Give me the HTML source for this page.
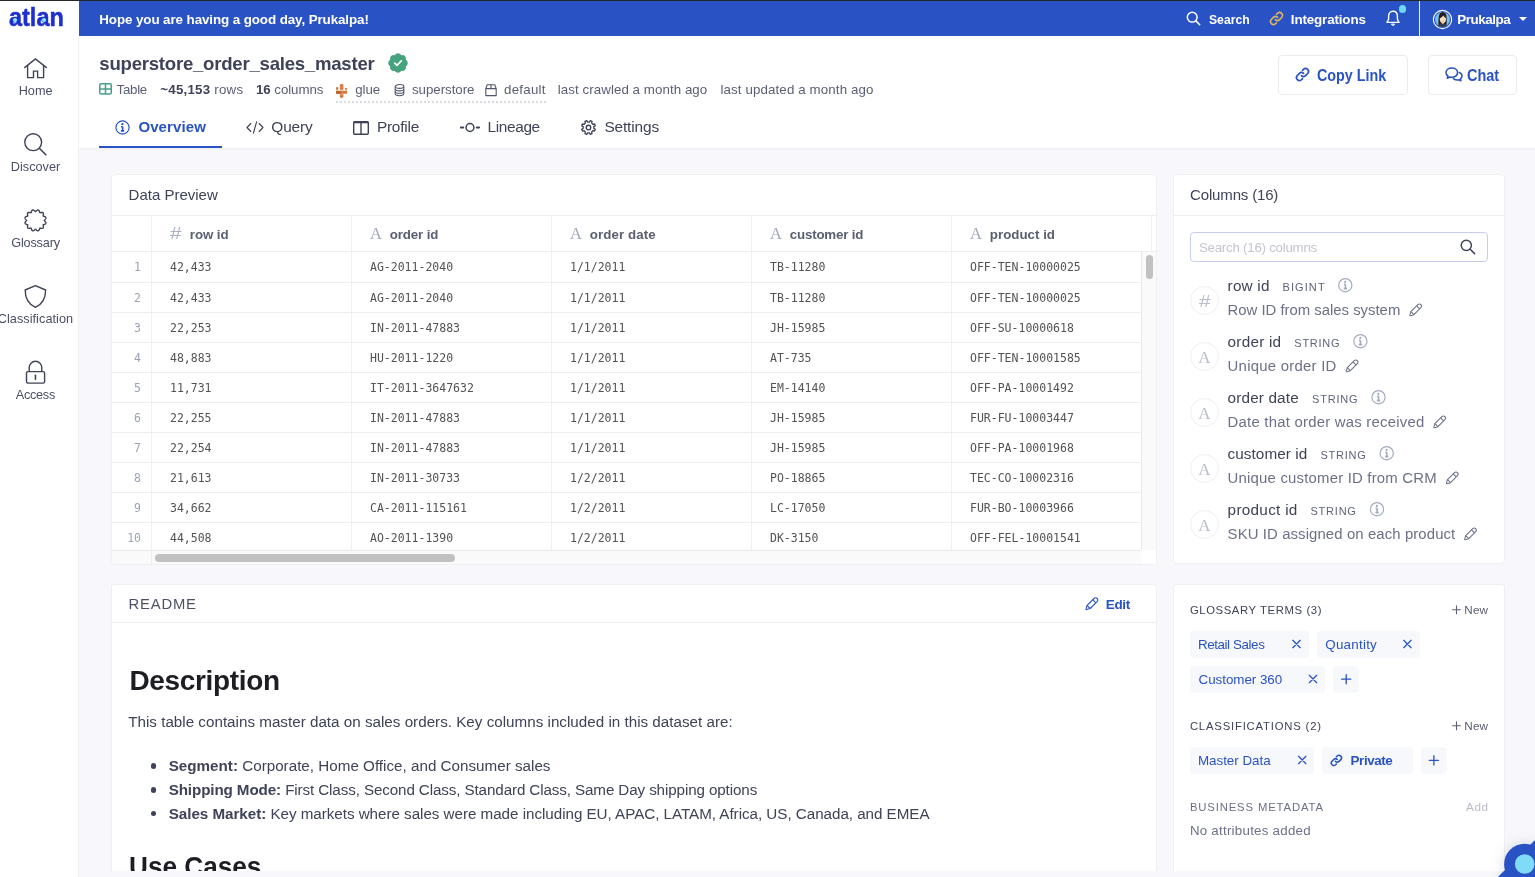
<!DOCTYPE html>
<html lang="en">
<head>
<meta charset="utf-8">
<title>superstore_order_sales_master</title>
<style>
*{box-sizing:border-box;margin:0;padding:0}
html,body{width:1535px;height:877px;overflow:hidden;background:#f8f8fc}
body{font-family:"Liberation Sans",sans-serif;color:#3e4359;position:relative;font-size:14px}
.x{position:absolute;white-space:nowrap}
body>div{will-change:transform}
svg{display:block;overflow:visible}
.card{position:absolute;background:#fff;border:1px solid #f0f0f1;border-radius:4px}
.hl{position:absolute;left:0;height:1px;background:#eeeef2}
.vl{position:absolute;width:1px;background:#f0f0f4}
.chip{position:absolute;border-radius:4px;background:#f7f8fb}
</style>
</head>
<body>
<div class="x" style="left:0px;top:0px;width:1535px;height:1px;background:#25262a"></div>
<!-- SIDEBAR -->
<div class="x" style="left:0;top:1px;width:79px;height:876px;background:#fff;overflow:hidden"><div class="x" style="left:78px;top:35px;width:1px;height:841px;background:#f1f1f1"></div>
<div class="x" id="t1" style="top:1px;font-size:25.5px;line-height:30px;left:8.6px;color:#1d2fd0;font-weight:bold;transform:scaleX(0.9205);transform-origin:0 50%;-webkit-text-stroke:0.500px #1d2fd0;">atlan</div>
<div class="x" style="left:13.3px;top:17px;width:3.6px;height:3.6px;border-radius:50%;background:#8ee3fb;box-shadow:0 0 0 0.600px #1d2fd0"></div>
<div class="x" style="left:42px;top:17px;width:3.6px;height:3.6px;border-radius:50%;background:#8ee3fb;box-shadow:0 0 0 0.600px #1d2fd0"></div>
<svg class="x" style="left:0px;top:-1px" width="79" height="420" viewBox="0 0 79 420" ><g fill="none" stroke="#3e4359" stroke-width="1.400"><path d="M24.300 67.900L35.450 58.900L46.800 67.900"/><path d="M27.600 65.600V77.600H33.500V71.100H37.600V77.600H43.600V65.600"/><circle cx="33.200" cy="142.200" r="8.400"/><path d="M39.300 148.300L46.300 155.300" stroke-width="1.600"/><path d="M44.3 220.4L44.44 220.64L44.65 220.88L44.9 221.14L45.15 221.42L45.38 221.71L45.59 222.01L45.74 222.31L45.84 222.61L45.87 222.9L45.83 223.18L45.73 223.44L45.55 223.68L45.32 223.89L45.03 224.08L44.71 224.23L44.36 224.37L44.01 224.48L43.66 224.58L43.35 224.69L43.11 224.83L43.12 225.1L43.18 225.42L43.26 225.77L43.34 226.13L43.4 226.5L43.43 226.86L43.41 227.2L43.34 227.51L43.22 227.78L43.05 228L42.83 228.17L42.56 228.29L42.25 228.36L41.91 228.38L41.55 228.35L41.18 228.29L40.82 228.21L40.47 228.13L40.15 228.07L39.88 228.06L39.74 228.3L39.63 228.61L39.53 228.96L39.42 229.31L39.28 229.66L39.13 229.98L38.94 230.27L38.73 230.5L38.49 230.68L38.23 230.78L37.95 230.82L37.66 230.79L37.36 230.69L37.06 230.54L36.76 230.33L36.47 230.1L36.19 229.85L35.93 229.6L35.69 229.39L35.45 229.25L35.21 229.39L34.97 229.6L34.71 229.85L34.43 230.1L34.14 230.33L33.84 230.54L33.54 230.69L33.24 230.79L32.95 230.82L32.67 230.78L32.41 230.68L32.17 230.5L31.96 230.27L31.77 229.98L31.62 229.66L31.48 229.31L31.37 228.96L31.27 228.61L31.16 228.3L31.03 228.06L30.75 228.07L30.43 228.13L30.08 228.21L29.72 228.29L29.35 228.35L28.99 228.38L28.65 228.36L28.34 228.29L28.07 228.17L27.85 228L27.68 227.78L27.56 227.51L27.49 227.2L27.47 226.86L27.5 226.5L27.56 226.13L27.64 225.77L27.72 225.42L27.78 225.1L27.79 224.83L27.55 224.69L27.24 224.58L26.89 224.48L26.54 224.37L26.19 224.23L25.87 224.08L25.58 223.89L25.35 223.68L25.17 223.44L25.07 223.18L25.03 222.9L25.06 222.61L25.16 222.31L25.31 222.01L25.52 221.71L25.75 221.42L26 221.14L26.25 220.88L26.46 220.64L26.6 220.4L26.46 220.16L26.25 219.92L26 219.66L25.75 219.38L25.52 219.09L25.31 218.79L25.16 218.49L25.06 218.19L25.03 217.9L25.07 217.62L25.17 217.36L25.35 217.12L25.58 216.91L25.87 216.72L26.19 216.57L26.54 216.43L26.89 216.32L27.24 216.22L27.55 216.11L27.79 215.97L27.78 215.7L27.72 215.38L27.64 215.03L27.56 214.67L27.5 214.3L27.47 213.94L27.49 213.6L27.56 213.29L27.68 213.02L27.85 212.8L28.07 212.63L28.34 212.51L28.65 212.44L28.99 212.42L29.35 212.45L29.72 212.51L30.08 212.59L30.43 212.67L30.75 212.73L31.02 212.74L31.16 212.5L31.27 212.19L31.37 211.84L31.48 211.49L31.62 211.14L31.77 210.82L31.96 210.53L32.17 210.3L32.41 210.12L32.67 210.02L32.95 209.98L33.24 210.01L33.54 210.11L33.84 210.26L34.14 210.47L34.43 210.7L34.71 210.95L34.97 211.2L35.21 211.41L35.45 211.55L35.69 211.41L35.93 211.2L36.19 210.95L36.47 210.7L36.76 210.47L37.06 210.26L37.36 210.11L37.66 210.01L37.95 209.98L38.23 210.02L38.49 210.12L38.73 210.3L38.94 210.53L39.13 210.82L39.28 211.14L39.42 211.49L39.53 211.84L39.63 212.19L39.74 212.5L39.88 212.74L40.15 212.73L40.47 212.67L40.82 212.59L41.18 212.51L41.55 212.45L41.91 212.42L42.25 212.44L42.56 212.51L42.83 212.63L43.05 212.8L43.22 213.02L43.34 213.29L43.41 213.6L43.43 213.94L43.4 214.3L43.34 214.67L43.26 215.03L43.18 215.38L43.12 215.7L43.11 215.97L43.35 216.11L43.66 216.22L44.01 216.32L44.36 216.43L44.71 216.57L45.03 216.72L45.32 216.91L45.55 217.12L45.73 217.36L45.83 217.62L45.87 217.9L45.84 218.19L45.74 218.49L45.59 218.79L45.38 219.09L45.15 219.38L44.9 219.66L44.65 219.92L44.44 220.16Z" stroke-linejoin="round"/><path d="M35.400 285.600L45.600 290C45.700 298.500 42 304.300 35.400 307.400C28.800 304.300 25.100 298.500 25.200 290Z" stroke-linejoin="round"/><path d="M29.200 371.500V367.600A6.300 6.300 0 0 1 41.800 367.600V371.500"/><rect x="26.500" y="371.600" width="18.100" height="11.500" rx="1.500"/><path d="M35.450 375.200V379.300" stroke-linecap="round" stroke-width="1.600"/></g></svg>
<div class="x" id="t2" style="top:82px;font-size:12.7px;line-height:16px;left:18.7px;color:#4a5068;letter-spacing:-0.01px;">Home</div>
<div class="x" id="t3" style="top:158px;font-size:12.7px;line-height:16px;left:10.8px;color:#4a5068;letter-spacing:0.02px;">Discover</div>
<div class="x" id="t4" style="top:234px;font-size:12.7px;line-height:16px;left:11.2px;color:#4a5068;letter-spacing:-0.17px;">Glossary</div>
<div class="x" id="t5" style="top:310px;font-size:12.7px;line-height:16px;left:-2.3px;color:#4a5068;letter-spacing:0.05px;">Classification</div>
<div class="x" id="t6" style="top:386px;font-size:12.7px;line-height:16px;left:15.7px;color:#4a5068;letter-spacing:-0.26px;">Access</div>
</div>
<!-- TOPBAR -->
<div class="x" style="left:79px;top:1px;width:1456px;height:35px;background:#2953c4;color:#fff">
<div class="x" id="t7" style="top:10px;font-size:13.4px;line-height:17px;left:20.3px;color:#fff;font-weight:bold;letter-spacing:-0.1px;">Hope you are having a good day, Prukalpa!</div>
<svg class="x" style="left:1107px;top:10px" width="15" height="15" viewBox="0 0 15 15" ><g fill="none" stroke="#fff" stroke-width="1.500" stroke-linecap="round"><circle cx="6.200" cy="6.200" r="4.900"/><path d="M9.900 9.900L13.700 13.700"/></g></svg>
<div class="x" id="t8" style="top:10px;font-size:13.4px;line-height:17px;left:1129.5px;color:#fff;font-weight:bold;transform:scaleX(0.9088);transform-origin:0 50%;">Search</div>
<svg class="x" style="left:1190px;top:10px" width="15" height="15" viewBox="0 0 15 15" ><g fill="none" stroke="#e2b65a" stroke-width="1.5" stroke-linecap="round"><path d="M6.4 8.6a3 3 0 0 0 4.2 0l2.3-2.300a3 3 0 0 0-4.200-4.200l-1.200 1.200"/><path d="M8.600 6.400a3 3 0 0 0-4.200 0l-2.300 2.300a3 3 0 0 0 4.200 4.200l1.200-1.200"/></g></svg>
<div class="x" id="t9" style="top:10px;font-size:13.4px;line-height:17px;left:1211.8px;color:#fff;font-weight:bold;letter-spacing:-0.14px;">Integrations</div>
<svg class="x" style="left:1305.5px;top:8.7px" width="16" height="17" viewBox="0 0 16 17" ><g fill="none" stroke="#fff" stroke-width="1.400" stroke-linecap="round" stroke-linejoin="round"><path d="M8 1.200C5.200 1.200 3.600 3.400 3.600 6.200V9.200L2 12.400H14L12.400 9.200V6.200C12.400 3.400 10.800 1.200 8 1.200Z"/><path d="M6.400 14.400a1.700 1.500 0 0 0 3.200 0Z" fill="#fff" stroke-width="0.800"/></g></svg>
<div class="x" style="left:1319.7px;top:4.4px;width:7.4px;height:7.4px;border-radius:50%;background:#6fd8f7"></div>
<div class="x" style="left:1340px;top:0px;width:1px;height:35px;background:#f1f3fb"></div>
<svg class="x" style="left:1353px;top:8px" width="21" height="21" viewBox="0 0 21 21" ><defs><clipPath id="avc"><circle cx="10.500" cy="10.500" r="7.400"/></clipPath></defs><circle cx="10.500" cy="10.500" r="9.150" fill="none" stroke="#fff" stroke-width="1.100"/><g clip-path="url(#avc)"><rect x="2" y="2" width="17" height="17" fill="#73c2f4"/><path d="M6.800 18.500C6.300 14 6.300 9.500 7 6.600C7.700 3.800 9.300 3 10.700 3C12.600 3 14 4.200 14.400 6.800C14.800 9.500 14.800 13 14.500 15.500L12 16L8 17Z" fill="#2a1b16"/><path d="M9.700 12.500H11.800V15.200H9.700Z" fill="#f3d3b0"/><ellipse cx="10.900" cy="10.100" rx="3.100" ry="4" fill="#f6dcbc"/><path d="M7.400 9.500C7.600 7 9 5.600 10.800 5.600C12.500 5.600 13.900 6.800 14.200 9.200C13 8.400 11.800 7.500 11.200 6.400C10.300 7.800 8.800 8.900 7.400 9.500Z" fill="#2a1b16"/><path d="M4.800 19C5 16 7.200 14.600 9.700 14.400C10.400 15 11.200 15 11.900 14.400C14.400 14.700 16.300 16 16.500 19Z" fill="#2f3d4b"/><path d="M10.100 12.050Q10.900 12.500 11.700 12.050" stroke="#d9898a" stroke-width="0.500" fill="none"/></g></svg>
<div class="x" id="t10" style="top:10px;font-size:13.4px;line-height:17px;left:1378.3px;color:#fff;font-weight:bold;letter-spacing:-0.44px;">Prukalpa</div>
<div class="x" style="left:1439.8px;top:16.3px;width:0px;height:0px;border-left:4.600px solid transparent;border-right:4.600px solid transparent;border-top:4.800px solid #fff"></div>
</div>
<!-- HEADER -->
<div class="x" style="left:79px;top:36px;width:1456px;height:113px;background:#fff;border-bottom:1px solid #f0f0f0;box-shadow:0 1px 0 #f4f4f7">
<div class="x" id="t11" style="top:16px;font-size:18.6px;line-height:23px;left:20.3px;color:#3e4359;font-weight:bold;letter-spacing:-0.24px;">superstore_order_sales_master</div>
<svg class="x" style="left:309.3px;top:16.8px" width="20" height="20" viewBox="0 0 20 20" ><path fill="#45a47f" d="M17.85 13.25A3.7 3.7 0 0 1 13.25 17.85A3.7 3.7 0 0 1 6.75 17.85A3.7 3.7 0 0 1 2.15 13.25A3.7 3.7 0 0 1 2.15 6.75A3.7 3.7 0 0 1 6.75 2.15A3.7 3.7 0 0 1 13.25 2.15A3.7 3.7 0 0 1 17.85 6.75A3.7 3.7 0 0 1 17.85 13.25Z"/><path d="M6.800 10.200L9 12.300L13.300 7.900" fill="none" stroke="#fff" stroke-width="1.700" stroke-linecap="round" stroke-linejoin="round"/></svg>
<svg class="x" style="left:20px;top:47.1px" width="13" height="11.8" viewBox="0 0 13 11.8" ><g fill="none" stroke="#44a08c" stroke-width="1.500"><rect x="0.750" y="0.750" width="11.500" height="10.300" rx="1.300"/><path d="M0.750 5.900H12.250M6.500 0.750V11.050"/></g></svg>
<div class="x" id="t12" style="top:45px;font-size:13.3px;line-height:17px;left:37.6px;color:#595f74;letter-spacing:-0.3px;">Table</div>
<div class="x" id="t13" style="top:45px;font-size:13.3px;line-height:17px;left:81.3px;color:#595f74;letter-spacing:0.23px;"><b style="color:#3e4359">~45,153</b> rows</div>
<div class="x" id="t14" style="top:45px;font-size:13.3px;line-height:17px;left:177px;color:#595f74;letter-spacing:-0.06px;"><b style="color:#3e4359">16</b> columns</div>
<svg class="x" style="left:257px;top:48px" width="11.2" height="14" viewBox="0 0 11.2 14" ><rect x="3.900" y="0" width="3.500" height="5.900" rx="1.200" fill="#d98147"/><rect x="0.100" y="3" width="2.200" height="2.900" rx="0.900" fill="#cf7538"/><rect x="9" y="4" width="2.100" height="1.900" rx="0.800" fill="#c96e33"/><rect x="0" y="6.400" width="11.100" height="3.300" rx="0.500" fill="#d9783a"/><rect x="0" y="6.400" width="5" height="3.300" rx="0.500" fill="#b9652f"/><rect x="0" y="6.200" width="11.100" height="0.800" fill="#f4d9c4"/><rect x="3.900" y="9.700" width="3.500" height="4.100" rx="1.200" fill="#d0733a"/><rect x="3.900" y="9.700" width="3.500" height="1.800" fill="#e9a36f" opacity="0.700"/></svg>
<div class="x" id="t15" style="top:45px;font-size:13.3px;line-height:17px;left:276.2px;color:#595f74;letter-spacing:-0.08px;">glue</div>
<svg class="x" style="left:314.5px;top:47.6px" width="11" height="12.4" viewBox="0 0 11 12.4" ><g fill="none" stroke="#50566b" stroke-width="1.050"><ellipse cx="5.500" cy="2.500" rx="4.300" ry="1.900"/><path d="M1.200 2.500V9.800C1.200 10.900 3.100 11.700 5.500 11.700C7.900 11.700 9.800 10.900 9.800 9.800V2.500"/><path d="M1.200 5C1.200 6.100 3.100 6.900 5.500 6.900C7.900 6.900 9.800 6.100 9.800 5"/><path d="M1.200 7.400C1.200 8.500 3.100 9.300 5.500 9.300C7.900 9.300 9.800 8.500 9.800 7.400"/></g></svg>
<div class="x" id="t16" style="top:45px;font-size:13.3px;line-height:17px;left:333px;color:#595f74;letter-spacing:-0.04px;">superstore</div>
<svg class="x" style="left:405.5px;top:47.6px" width="12" height="12.4" viewBox="0 0 12 12.4" ><g fill="none" stroke="#50566b" stroke-width="1.100" stroke-linejoin="round"><path d="M0.800 4.600L2.200 0.700H9.800L11.200 4.600V11.600H0.800Z"/><path d="M0.800 4.600H11.200M6 0.700V4.600"/></g></svg>
<div class="x" id="t17" style="top:45px;font-size:13.3px;line-height:17px;left:425.1px;color:#595f74;letter-spacing:0.23px;">default</div>
<div class="x" style="left:257px;top:65px;width:210px;height:0px;border-top:2px dotted #d9dbe3"></div>
<div class="x" id="t18" style="top:45px;font-size:13.3px;line-height:17px;left:478.8px;color:#595f74;letter-spacing:0.07px;">last crawled a month ago</div>
<div class="x" id="t19" style="top:45px;font-size:13.3px;line-height:17px;left:641.4px;color:#595f74;letter-spacing:0.13px;">last updated a month ago</div>
<svg class="x" style="left:0;top:0" width="1" height="1"><g transform="translate(43.5 91.5)" fill="none" stroke="#2953c4"><circle r="6.600" stroke-width="1.200"/><path d="M0.100 -0.900V3.300M-1.400 -0.800H0.100M-1.600 3.400H1.700" stroke-width="1.600"/><circle cx="-0.100" cy="-3.300" r="1.100" fill="#2953c4" stroke="none"/></g></svg>
<div class="x" id="t20" style="top:81px;font-size:15px;line-height:19px;left:59.4px;color:#2953c4;font-weight:bold;letter-spacing:0.11px;">Overview</div>
<div class="x" style="left:20px;top:110px;width:123px;height:2px;background:#2953c4"></div>
<svg class="x" style="left:167px;top:85px" width="18" height="13" viewBox="0 0 18 13" ><g fill="none" stroke="#3e4359" stroke-width="1.150" stroke-linecap="round" stroke-linejoin="round"><path d="M4.800 2.500L1 6.500L4.800 10.500"/><path d="M13.200 2.500L17 6.500L13.200 10.500"/><path d="M10.600 0.800L7.400 12.200"/></g></svg>
<div class="x" id="t21" style="top:81px;font-size:15.4px;line-height:19px;left:192.3px;color:#3e4359;letter-spacing:-0.13px;">Query</div>
<svg class="x" style="left:274px;top:84.5px" width="16" height="14" viewBox="0 0 16 14" ><g fill="none" stroke="#3e4359" stroke-width="1.400"><rect x="0.700" y="0.700" width="14.600" height="12.600" rx="1"/><path d="M8 0.700V13.300"/><path d="M0.700 1.300H15.300" stroke-width="2"/></g></svg>
<div class="x" id="t22" style="top:81px;font-size:15.4px;line-height:19px;left:297.9px;color:#3e4359;letter-spacing:-0.22px;">Profile</div>
<svg class="x" style="left:381px;top:86px" width="20" height="11" viewBox="0 0 20 11" ><g fill="none" stroke="#3e4359" stroke-width="1.500" stroke-linecap="round"><circle cx="10" cy="5.500" r="3.900"/><path d="M0.800 5.500H3.300M16.700 5.500H19.200" stroke-width="1.800"/></g></svg>
<div class="x" id="t23" style="top:81px;font-size:15.4px;line-height:19px;left:408.5px;color:#3e4359;letter-spacing:-0.35px;">Lineage</div>
<svg class="x" style="left:502px;top:84px" width="15" height="15" viewBox="0 0 15 15" ><g fill="none" stroke="#3e4359" stroke-width="1.350" stroke-linejoin="round"><path d="M12.83 8.34L14.27 9.29L13.55 11.02L11.87 10.67L10.67 11.87L11.02 13.55L9.29 14.27L8.34 12.83L6.66 12.83L5.71 14.27L3.98 13.55L4.33 11.87L3.13 10.67L1.45 11.02L0.73 9.29L2.17 8.34L2.17 6.66L0.73 5.71L1.45 3.98L3.13 4.33L4.33 3.13L3.98 1.45L5.71 0.73L6.66 2.17L8.34 2.17L9.29 0.73L11.02 1.45L10.67 3.13L11.87 4.33L13.55 3.98L14.27 5.71L12.83 6.66Z"/><circle cx="7.500" cy="7.500" r="2.300"/></g></svg>
<div class="x" id="t24" style="top:81px;font-size:15.4px;line-height:19px;left:525.4px;color:#3e4359;letter-spacing:-0.13px;">Settings</div>
<div class="x" style="left:1199px;top:19px;width:130px;height:40px;border:1px solid #ebebee;border-radius:4px;background:#fff"></div>
<svg class="x" style="left:1215.5px;top:31px" width="15" height="15" viewBox="0 0 15 15" ><g fill="none" stroke="#2953c4" stroke-width="1.7" stroke-linecap="round"><path d="M6.4 8.6a3 3 0 0 0 4.2 0l2.3-2.300a3 3 0 0 0-4.200-4.200l-1.200 1.200"/><path d="M8.600 6.400a3 3 0 0 0-4.200 0l-2.300 2.300a3 3 0 0 0 4.200 4.200l1.200-1.200"/></g></svg>
<div class="x" id="t25" style="top:30px;font-size:15.7px;line-height:19px;left:1238.4px;color:#2953c4;font-weight:bold;transform:scaleX(0.9139);transform-origin:0 50%;">Copy Link</div>
<div class="x" style="left:1349px;top:19px;width:89px;height:40px;border:1px solid #ebebee;border-radius:4px;background:#fff"></div>
<svg class="x" style="left:1365.5px;top:31px" width="18" height="15" viewBox="0 0 18 15" ><g fill="none" stroke="#2953c4" stroke-width="1.550" stroke-linejoin="round"><path d="M6.800 1C3.500 1 1 3 1 5.600C1 7 1.700 8.200 2.800 9L2.300 11.200L4.800 10C5.400 10.200 6.100 10.300 6.800 10.300C10.100 10.300 12.600 8.200 12.600 5.600C12.600 3 10.100 1 6.800 1Z"/><path d="M13.600 5.200C15.600 5.700 17 7.200 17 9C17 10.200 16.400 11.200 15.500 11.900L15.900 13.800L13.700 12.800C13.200 12.900 12.700 13 12.100 13C10.300 13 8.800 12.300 8 11.200"/></g></svg>
<div class="x" id="t26" style="top:30px;font-size:15.7px;line-height:19px;left:1388.3px;color:#2953c4;font-weight:bold;transform:scaleX(0.9204);transform-origin:0 50%;">Chat</div>
</div>
<!-- DATA PREVIEW -->
<div class="card" style="left:111px;top:174px;width:1046px;height:391px;overflow:hidden">
<div class="x" id="t27" style="top:10px;font-size:15px;line-height:19px;left:16.6px;color:#3e4359;">Data Preview</div>
<div class="hl" style="top:40px;width:1044px"></div>
<div class="hl" style="top:76px;width:1044px"></div>
<div class="vl" style="left:39px;top:41px;height:348px"></div>
<div class="vl" style="left:239px;top:41px;height:348px"></div>
<div class="vl" style="left:439px;top:41px;height:348px"></div>
<div class="vl" style="left:639px;top:41px;height:348px"></div>
<div class="vl" style="left:839px;top:41px;height:348px"></div>
<div class="vl" style="left:1039px;top:41px;height:348px"></div>
<div class="x" id="t28" style="top:49px;font-size:16px;line-height:19px;left:58px;color:#a9b0c2;transform:scaleX(1.3);transform-origin:0 50%;">#</div>
<div class="x" id="t29" style="top:51px;font-size:13.3px;line-height:17px;left:77.8px;color:#5a6072;font-weight:bold;letter-spacing:-0.09px;">row id</div>
<div class="x" id="t30" style="top:48px;font-size:16.5px;line-height:21px;left:258px;color:#a0a8ba;font-family:'Liberation Serif',serif;">A</div>
<div class="x" id="t31" style="top:51px;font-size:13.3px;line-height:17px;left:277.8px;color:#5a6072;font-weight:bold;letter-spacing:-0.14px;">order id</div>
<div class="x" id="t32" style="top:48px;font-size:16.5px;line-height:21px;left:458px;color:#a0a8ba;font-family:'Liberation Serif',serif;">A</div>
<div class="x" id="t33" style="top:51px;font-size:13.3px;line-height:17px;left:477.8px;color:#5a6072;font-weight:bold;letter-spacing:0.1px;">order date</div>
<div class="x" id="t34" style="top:48px;font-size:16.5px;line-height:21px;left:658px;color:#a0a8ba;font-family:'Liberation Serif',serif;">A</div>
<div class="x" id="t35" style="top:51px;font-size:13.3px;line-height:17px;left:677.8px;color:#5a6072;font-weight:bold;letter-spacing:-0.18px;">customer id</div>
<div class="x" id="t36" style="top:48px;font-size:16.5px;line-height:21px;left:858px;color:#a0a8ba;font-family:'Liberation Serif',serif;">A</div>
<div class="x" id="t37" style="top:51px;font-size:13.3px;line-height:17px;left:877.8px;color:#5a6072;font-weight:bold;letter-spacing:0.02px;">product id</div>
<div class="x" id="t38" style="top:84px;font-size:11.5px;line-height:16px;right:1015px;color:#9aa3b8;font-family:'DejaVu Sans Mono','Liberation Mono',monospace;">1</div>
<div class="x" id="t39" style="top:84px;font-size:11.5px;line-height:16px;left:58px;color:#535353;font-family:'DejaVu Sans Mono','Liberation Mono',monospace;">42,433</div>
<div class="x" id="t40" style="top:84px;font-size:11.5px;line-height:16px;left:258px;color:#535353;font-family:'DejaVu Sans Mono','Liberation Mono',monospace;">AG-2011-2040</div>
<div class="x" id="t41" style="top:84px;font-size:11.5px;line-height:16px;left:458px;color:#535353;font-family:'DejaVu Sans Mono','Liberation Mono',monospace;">1/1/2011</div>
<div class="x" id="t42" style="top:84px;font-size:11.5px;line-height:16px;left:658px;color:#535353;font-family:'DejaVu Sans Mono','Liberation Mono',monospace;">TB-11280</div>
<div class="x" id="t43" style="top:84px;font-size:11.5px;line-height:16px;left:858px;color:#535353;font-family:'DejaVu Sans Mono','Liberation Mono',monospace;">OFF-TEN-10000025</div>
<div class="hl" style="top:107px;width:1030px"></div>
<div class="x" id="t44" style="top:115px;font-size:11.5px;line-height:16px;right:1015px;color:#9aa3b8;font-family:'DejaVu Sans Mono','Liberation Mono',monospace;">2</div>
<div class="x" id="t45" style="top:115px;font-size:11.5px;line-height:16px;left:58px;color:#535353;font-family:'DejaVu Sans Mono','Liberation Mono',monospace;">42,433</div>
<div class="x" id="t46" style="top:115px;font-size:11.5px;line-height:16px;left:258px;color:#535353;font-family:'DejaVu Sans Mono','Liberation Mono',monospace;">AG-2011-2040</div>
<div class="x" id="t47" style="top:115px;font-size:11.5px;line-height:16px;left:458px;color:#535353;font-family:'DejaVu Sans Mono','Liberation Mono',monospace;">1/1/2011</div>
<div class="x" id="t48" style="top:115px;font-size:11.5px;line-height:16px;left:658px;color:#535353;font-family:'DejaVu Sans Mono','Liberation Mono',monospace;">TB-11280</div>
<div class="x" id="t49" style="top:115px;font-size:11.5px;line-height:16px;left:858px;color:#535353;font-family:'DejaVu Sans Mono','Liberation Mono',monospace;">OFF-TEN-10000025</div>
<div class="hl" style="top:137px;width:1030px"></div>
<div class="x" id="t50" style="top:145px;font-size:11.5px;line-height:16px;right:1015px;color:#9aa3b8;font-family:'DejaVu Sans Mono','Liberation Mono',monospace;">3</div>
<div class="x" id="t51" style="top:145px;font-size:11.5px;line-height:16px;left:58px;color:#535353;font-family:'DejaVu Sans Mono','Liberation Mono',monospace;">22,253</div>
<div class="x" id="t52" style="top:145px;font-size:11.5px;line-height:16px;left:258px;color:#535353;font-family:'DejaVu Sans Mono','Liberation Mono',monospace;">IN-2011-47883</div>
<div class="x" id="t53" style="top:145px;font-size:11.5px;line-height:16px;left:458px;color:#535353;font-family:'DejaVu Sans Mono','Liberation Mono',monospace;">1/1/2011</div>
<div class="x" id="t54" style="top:145px;font-size:11.5px;line-height:16px;left:658px;color:#535353;font-family:'DejaVu Sans Mono','Liberation Mono',monospace;">JH-15985</div>
<div class="x" id="t55" style="top:145px;font-size:11.5px;line-height:16px;left:858px;color:#535353;font-family:'DejaVu Sans Mono','Liberation Mono',monospace;">OFF-SU-10000618</div>
<div class="hl" style="top:167px;width:1030px"></div>
<div class="x" id="t56" style="top:175px;font-size:11.5px;line-height:16px;right:1015px;color:#9aa3b8;font-family:'DejaVu Sans Mono','Liberation Mono',monospace;">4</div>
<div class="x" id="t57" style="top:175px;font-size:11.5px;line-height:16px;left:58px;color:#535353;font-family:'DejaVu Sans Mono','Liberation Mono',monospace;">48,883</div>
<div class="x" id="t58" style="top:175px;font-size:11.5px;line-height:16px;left:258px;color:#535353;font-family:'DejaVu Sans Mono','Liberation Mono',monospace;">HU-2011-1220</div>
<div class="x" id="t59" style="top:175px;font-size:11.5px;line-height:16px;left:458px;color:#535353;font-family:'DejaVu Sans Mono','Liberation Mono',monospace;">1/1/2011</div>
<div class="x" id="t60" style="top:175px;font-size:11.5px;line-height:16px;left:658px;color:#535353;font-family:'DejaVu Sans Mono','Liberation Mono',monospace;">AT-735</div>
<div class="x" id="t61" style="top:175px;font-size:11.5px;line-height:16px;left:858px;color:#535353;font-family:'DejaVu Sans Mono','Liberation Mono',monospace;">OFF-TEN-10001585</div>
<div class="hl" style="top:197px;width:1030px"></div>
<div class="x" id="t62" style="top:205px;font-size:11.5px;line-height:16px;right:1015px;color:#9aa3b8;font-family:'DejaVu Sans Mono','Liberation Mono',monospace;">5</div>
<div class="x" id="t63" style="top:205px;font-size:11.5px;line-height:16px;left:58px;color:#535353;font-family:'DejaVu Sans Mono','Liberation Mono',monospace;">11,731</div>
<div class="x" id="t64" style="top:205px;font-size:11.5px;line-height:16px;left:258px;color:#535353;font-family:'DejaVu Sans Mono','Liberation Mono',monospace;">IT-2011-3647632</div>
<div class="x" id="t65" style="top:205px;font-size:11.5px;line-height:16px;left:458px;color:#535353;font-family:'DejaVu Sans Mono','Liberation Mono',monospace;">1/1/2011</div>
<div class="x" id="t66" style="top:205px;font-size:11.5px;line-height:16px;left:658px;color:#535353;font-family:'DejaVu Sans Mono','Liberation Mono',monospace;">EM-14140</div>
<div class="x" id="t67" style="top:205px;font-size:11.5px;line-height:16px;left:858px;color:#535353;font-family:'DejaVu Sans Mono','Liberation Mono',monospace;">OFF-PA-10001492</div>
<div class="hl" style="top:227px;width:1030px"></div>
<div class="x" id="t68" style="top:235px;font-size:11.5px;line-height:16px;right:1015px;color:#9aa3b8;font-family:'DejaVu Sans Mono','Liberation Mono',monospace;">6</div>
<div class="x" id="t69" style="top:235px;font-size:11.5px;line-height:16px;left:58px;color:#535353;font-family:'DejaVu Sans Mono','Liberation Mono',monospace;">22,255</div>
<div class="x" id="t70" style="top:235px;font-size:11.5px;line-height:16px;left:258px;color:#535353;font-family:'DejaVu Sans Mono','Liberation Mono',monospace;">IN-2011-47883</div>
<div class="x" id="t71" style="top:235px;font-size:11.5px;line-height:16px;left:458px;color:#535353;font-family:'DejaVu Sans Mono','Liberation Mono',monospace;">1/1/2011</div>
<div class="x" id="t72" style="top:235px;font-size:11.5px;line-height:16px;left:658px;color:#535353;font-family:'DejaVu Sans Mono','Liberation Mono',monospace;">JH-15985</div>
<div class="x" id="t73" style="top:235px;font-size:11.5px;line-height:16px;left:858px;color:#535353;font-family:'DejaVu Sans Mono','Liberation Mono',monospace;">FUR-FU-10003447</div>
<div class="hl" style="top:257px;width:1030px"></div>
<div class="x" id="t74" style="top:265px;font-size:11.5px;line-height:16px;right:1015px;color:#9aa3b8;font-family:'DejaVu Sans Mono','Liberation Mono',monospace;">7</div>
<div class="x" id="t75" style="top:265px;font-size:11.5px;line-height:16px;left:58px;color:#535353;font-family:'DejaVu Sans Mono','Liberation Mono',monospace;">22,254</div>
<div class="x" id="t76" style="top:265px;font-size:11.5px;line-height:16px;left:258px;color:#535353;font-family:'DejaVu Sans Mono','Liberation Mono',monospace;">IN-2011-47883</div>
<div class="x" id="t77" style="top:265px;font-size:11.5px;line-height:16px;left:458px;color:#535353;font-family:'DejaVu Sans Mono','Liberation Mono',monospace;">1/1/2011</div>
<div class="x" id="t78" style="top:265px;font-size:11.5px;line-height:16px;left:658px;color:#535353;font-family:'DejaVu Sans Mono','Liberation Mono',monospace;">JH-15985</div>
<div class="x" id="t79" style="top:265px;font-size:11.5px;line-height:16px;left:858px;color:#535353;font-family:'DejaVu Sans Mono','Liberation Mono',monospace;">OFF-PA-10001968</div>
<div class="hl" style="top:287px;width:1030px"></div>
<div class="x" id="t80" style="top:295px;font-size:11.5px;line-height:16px;right:1015px;color:#9aa3b8;font-family:'DejaVu Sans Mono','Liberation Mono',monospace;">8</div>
<div class="x" id="t81" style="top:295px;font-size:11.5px;line-height:16px;left:58px;color:#535353;font-family:'DejaVu Sans Mono','Liberation Mono',monospace;">21,613</div>
<div class="x" id="t82" style="top:295px;font-size:11.5px;line-height:16px;left:258px;color:#535353;font-family:'DejaVu Sans Mono','Liberation Mono',monospace;">IN-2011-30733</div>
<div class="x" id="t83" style="top:295px;font-size:11.5px;line-height:16px;left:458px;color:#535353;font-family:'DejaVu Sans Mono','Liberation Mono',monospace;">1/2/2011</div>
<div class="x" id="t84" style="top:295px;font-size:11.5px;line-height:16px;left:658px;color:#535353;font-family:'DejaVu Sans Mono','Liberation Mono',monospace;">PO-18865</div>
<div class="x" id="t85" style="top:295px;font-size:11.5px;line-height:16px;left:858px;color:#535353;font-family:'DejaVu Sans Mono','Liberation Mono',monospace;">TEC-CO-10002316</div>
<div class="hl" style="top:317px;width:1030px"></div>
<div class="x" id="t86" style="top:325px;font-size:11.5px;line-height:16px;right:1015px;color:#9aa3b8;font-family:'DejaVu Sans Mono','Liberation Mono',monospace;">9</div>
<div class="x" id="t87" style="top:325px;font-size:11.5px;line-height:16px;left:58px;color:#535353;font-family:'DejaVu Sans Mono','Liberation Mono',monospace;">34,662</div>
<div class="x" id="t88" style="top:325px;font-size:11.5px;line-height:16px;left:258px;color:#535353;font-family:'DejaVu Sans Mono','Liberation Mono',monospace;">CA-2011-115161</div>
<div class="x" id="t89" style="top:325px;font-size:11.5px;line-height:16px;left:458px;color:#535353;font-family:'DejaVu Sans Mono','Liberation Mono',monospace;">1/2/2011</div>
<div class="x" id="t90" style="top:325px;font-size:11.5px;line-height:16px;left:658px;color:#535353;font-family:'DejaVu Sans Mono','Liberation Mono',monospace;">LC-17050</div>
<div class="x" id="t91" style="top:325px;font-size:11.5px;line-height:16px;left:858px;color:#535353;font-family:'DejaVu Sans Mono','Liberation Mono',monospace;">FUR-BO-10003966</div>
<div class="hl" style="top:347px;width:1030px"></div>
<div class="x" id="t92" style="top:355px;font-size:11.5px;line-height:16px;right:1015px;color:#9aa3b8;font-family:'DejaVu Sans Mono','Liberation Mono',monospace;">10</div>
<div class="x" id="t93" style="top:355px;font-size:11.5px;line-height:16px;left:58px;color:#535353;font-family:'DejaVu Sans Mono','Liberation Mono',monospace;">44,508</div>
<div class="x" id="t94" style="top:355px;font-size:11.5px;line-height:16px;left:258px;color:#535353;font-family:'DejaVu Sans Mono','Liberation Mono',monospace;">AO-2011-1390</div>
<div class="x" id="t95" style="top:355px;font-size:11.5px;line-height:16px;left:458px;color:#535353;font-family:'DejaVu Sans Mono','Liberation Mono',monospace;">1/2/2011</div>
<div class="x" id="t96" style="top:355px;font-size:11.5px;line-height:16px;left:658px;color:#535353;font-family:'DejaVu Sans Mono','Liberation Mono',monospace;">DK-3150</div>
<div class="x" id="t97" style="top:355px;font-size:11.5px;line-height:16px;left:858px;color:#535353;font-family:'DejaVu Sans Mono','Liberation Mono',monospace;">OFF-FEL-10001541</div>
<div class="x" style="left:1029px;top:77px;width:15px;height:298px;background:#fafafa;border-left:1px solid #e8e8e8"></div>
<div class="x" style="left:1033.5px;top:80px;width:7px;height:24px;border-radius:4px;background:#c1c1c1"></div>
<div class="x" style="left:0px;top:375px;width:1044px;height:14px;background:#fafafa;border-top:1px solid #e8e8e8"></div>
<div class="x" style="left:39px;top:375px;width:1px;height:14px;background:#ededf2"></div>
<div class="x" style="left:43px;top:379px;width:300px;height:8px;border-radius:4px;background:#c1c1c1"></div>
<div class="x" style="left:1029px;top:375px;width:15px;height:14px;background:#fff"></div>
</div>
<!-- COLUMNS -->
<div class="card" style="left:1173px;top:174px;width:332px;height:390px">
<div class="x" id="t98" style="top:10px;font-size:15px;line-height:19px;left:16.1px;color:#3e4359;letter-spacing:-0.16px;">Columns (16)</div>
<div class="hl" style="top:40px;width:330px"></div>
<div class="x" style="left:16px;top:57px;width:298px;height:30px;border:1px solid #c9ccf2;border-radius:4px;background:#fff"></div>
<div class="x" id="t99" style="top:64px;font-size:13.3px;line-height:17px;left:24.9px;color:#c3c6d1;letter-spacing:-0.24px;">Search (16) columns</div>
<svg class="x" style="left:285.5px;top:63.5px" width="16" height="16" viewBox="0 0 16 16" ><g fill="none" stroke="#3e4359" stroke-width="1.500" stroke-linecap="round"><circle cx="6.300" cy="6.300" r="5.100"/><path d="M10.200 10.200L14.600 14.600"/></g></svg>
<div class="x" style="left:16px;top:111px;width:29px;height:29px;border-radius:50%;border:1px solid #eeeff3"></div>
<div class="x" id="t100" style="top:117px;font-size:16px;line-height:19px;left:24.6px;color:#b7bdcc;transform:scaleX(1.3);transform-origin:0 50%;">#</div>
<div class="x" id="t101" style="top:101px;font-size:15.3px;line-height:19px;left:53.6px;color:#3e4359;letter-spacing:0.2px;">row id</div>
<div class="x" id="t102" style="top:105px;font-size:11px;line-height:14px;left:108.5px;color:#5d637b;letter-spacing:1.09px;">BIGINT</div>
<svg class="x" style="left:0;top:0" width="1" height="1"><g transform="translate(171.3 110.2)" fill="none" stroke="#a3abc0"><circle r="6.600" stroke-width="1.200"/><path d="M0.100 -0.900V3.300M-1.400 -0.800H0.100M-1.600 3.400H1.700" stroke-width="1.600"/><circle cx="-0.100" cy="-3.300" r="1.100" fill="#a3abc0" stroke="none"/></g></svg>
<div class="x" id="t103" style="top:126px;font-size:14.9px;line-height:18px;left:53.6px;color:#6b7189;letter-spacing:-0.01px;">Row ID from sales system</div>
<svg class="x" style="left:0;top:0" width="1" height="1"><g transform="translate(241.6 135) rotate(-45)" fill="none" stroke="#6b7189" stroke-width="1.05" stroke-linejoin="round"><path d="M-4.500 -2.150H5.350A2.150 2.150 0 0 1 5.350 2.150H-4.500L-7.700 0.500Q-8.200 0 -7.700 -0.500Z"/><path d="M-4.500 -2.150V2.150M3.600 -2.150V2.150"/></g></svg>
<div class="x" style="left:16px;top:167px;width:29px;height:29px;border-radius:50%;border:1px solid #eeeff3"></div>
<div class="x" id="t104" style="top:172px;font-size:17px;line-height:21px;left:24.3px;color:#b7bdcc;font-family:'Liberation Serif',serif;">A</div>
<div class="x" id="t105" style="top:157px;font-size:15.3px;line-height:19px;left:53.6px;color:#3e4359;letter-spacing:0.23px;">order id</div>
<div class="x" id="t106" style="top:161px;font-size:11px;line-height:14px;left:120.3px;color:#5d637b;letter-spacing:0.75px;">STRING</div>
<svg class="x" style="left:0;top:0" width="1" height="1"><g transform="translate(186.4 166.2)" fill="none" stroke="#a3abc0"><circle r="6.600" stroke-width="1.200"/><path d="M0.100 -0.900V3.300M-1.400 -0.800H0.100M-1.600 3.400H1.700" stroke-width="1.600"/><circle cx="-0.100" cy="-3.300" r="1.100" fill="#a3abc0" stroke="none"/></g></svg>
<div class="x" id="t107" style="top:182px;font-size:14.9px;line-height:18px;left:53.6px;color:#6b7189;letter-spacing:0.26px;">Unique order ID</div>
<svg class="x" style="left:0;top:0" width="1" height="1"><g transform="translate(178 191) rotate(-45)" fill="none" stroke="#6b7189" stroke-width="1.05" stroke-linejoin="round"><path d="M-4.500 -2.150H5.350A2.150 2.150 0 0 1 5.350 2.150H-4.500L-7.700 0.500Q-8.200 0 -7.700 -0.500Z"/><path d="M-4.500 -2.150V2.150M3.600 -2.150V2.150"/></g></svg>
<div class="x" style="left:16px;top:223px;width:29px;height:29px;border-radius:50%;border:1px solid #eeeff3"></div>
<div class="x" id="t108" style="top:228px;font-size:17px;line-height:21px;left:24.3px;color:#b7bdcc;font-family:'Liberation Serif',serif;">A</div>
<div class="x" id="t109" style="top:213px;font-size:15.3px;line-height:19px;left:53.6px;color:#3e4359;letter-spacing:0.15px;">order date</div>
<div class="x" id="t110" style="top:217px;font-size:11px;line-height:14px;left:138.1px;color:#5d637b;letter-spacing:0.79px;">STRING</div>
<svg class="x" style="left:0;top:0" width="1" height="1"><g transform="translate(204.5 222.2)" fill="none" stroke="#a3abc0"><circle r="6.600" stroke-width="1.200"/><path d="M0.100 -0.900V3.300M-1.400 -0.800H0.100M-1.600 3.400H1.700" stroke-width="1.600"/><circle cx="-0.100" cy="-3.300" r="1.100" fill="#a3abc0" stroke="none"/></g></svg>
<div class="x" id="t111" style="top:238px;font-size:14.9px;line-height:18px;left:53.6px;color:#6b7189;letter-spacing:0.23px;">Date that order was received</div>
<svg class="x" style="left:0;top:0" width="1" height="1"><g transform="translate(265.6 247) rotate(-45)" fill="none" stroke="#6b7189" stroke-width="1.05" stroke-linejoin="round"><path d="M-4.500 -2.150H5.350A2.150 2.150 0 0 1 5.350 2.150H-4.500L-7.700 0.500Q-8.200 0 -7.700 -0.500Z"/><path d="M-4.500 -2.150V2.150M3.600 -2.150V2.150"/></g></svg>
<div class="x" style="left:16px;top:279px;width:29px;height:29px;border-radius:50%;border:1px solid #eeeff3"></div>
<div class="x" id="t112" style="top:284px;font-size:17px;line-height:21px;left:24.3px;color:#b7bdcc;font-family:'Liberation Serif',serif;">A</div>
<div class="x" id="t113" style="top:269px;font-size:15.3px;line-height:19px;left:53.6px;color:#3e4359;letter-spacing:0.05px;">customer id</div>
<div class="x" id="t114" style="top:273px;font-size:11px;line-height:14px;left:146.5px;color:#5d637b;letter-spacing:0.73px;">STRING</div>
<svg class="x" style="left:0;top:0" width="1" height="1"><g transform="translate(212.7 278.2)" fill="none" stroke="#a3abc0"><circle r="6.600" stroke-width="1.200"/><path d="M0.100 -0.900V3.300M-1.400 -0.800H0.100M-1.600 3.400H1.700" stroke-width="1.600"/><circle cx="-0.100" cy="-3.300" r="1.100" fill="#a3abc0" stroke="none"/></g></svg>
<div class="x" id="t115" style="top:294px;font-size:14.9px;line-height:18px;left:53.6px;color:#6b7189;letter-spacing:0.21px;">Unique customer ID from CRM</div>
<svg class="x" style="left:0;top:0" width="1" height="1"><g transform="translate(278.2 303) rotate(-45)" fill="none" stroke="#6b7189" stroke-width="1.05" stroke-linejoin="round"><path d="M-4.500 -2.150H5.350A2.150 2.150 0 0 1 5.350 2.150H-4.500L-7.700 0.500Q-8.200 0 -7.700 -0.500Z"/><path d="M-4.500 -2.150V2.150M3.600 -2.150V2.150"/></g></svg>
<div class="x" style="left:16px;top:335px;width:29px;height:29px;border-radius:50%;border:1px solid #eeeff3"></div>
<div class="x" id="t116" style="top:340px;font-size:17px;line-height:21px;left:24.3px;color:#b7bdcc;font-family:'Liberation Serif',serif;">A</div>
<div class="x" id="t117" style="top:325px;font-size:15.3px;line-height:19px;left:53.6px;color:#3e4359;letter-spacing:0.29px;">product id</div>
<div class="x" id="t118" style="top:329px;font-size:11px;line-height:14px;left:136.5px;color:#5d637b;letter-spacing:0.77px;">STRING</div>
<svg class="x" style="left:0;top:0" width="1" height="1"><g transform="translate(203 334.2)" fill="none" stroke="#a3abc0"><circle r="6.600" stroke-width="1.200"/><path d="M0.100 -0.900V3.300M-1.400 -0.800H0.100M-1.600 3.400H1.700" stroke-width="1.600"/><circle cx="-0.100" cy="-3.300" r="1.100" fill="#a3abc0" stroke="none"/></g></svg>
<div class="x" id="t119" style="top:350px;font-size:14.9px;line-height:18px;left:53.6px;color:#6b7189;letter-spacing:0.11px;">SKU ID assigned on each product</div>
<svg class="x" style="left:0;top:0" width="1" height="1"><g transform="translate(296.4 359) rotate(-45)" fill="none" stroke="#6b7189" stroke-width="1.05" stroke-linejoin="round"><path d="M-4.500 -2.150H5.350A2.150 2.150 0 0 1 5.350 2.150H-4.500L-7.700 0.500Q-8.200 0 -7.700 -0.500Z"/><path d="M-4.500 -2.150V2.150M3.600 -2.150V2.150"/></g></svg>
</div>
<!-- README -->
<div class="card" style="left:111px;top:584px;width:1046px;height:287px;overflow:hidden;border-bottom:none;border-radius:4px 4px 0 0">
<div class="x" id="t120" style="top:10px;font-size:14.8px;line-height:18px;left:16.5px;color:#4b5166;letter-spacing:0.82px;">README</div>
<svg class="x" style="left:0;top:0" width="1" height="1"><g transform="translate(979.8 18.8) rotate(-45)" fill="none" stroke="#2953c4" stroke-width="1.1" stroke-linejoin="round"><path d="M-4.500 -2.150H5.350A2.150 2.150 0 0 1 5.350 2.150H-4.500L-7.700 0.500Q-8.200 0 -7.700 -0.500Z"/><path d="M-4.500 -2.150V2.150M3.600 -2.150V2.150"/></g></svg>
<div class="x" id="t121" style="top:11px;font-size:13.5px;line-height:17px;left:993.8px;color:#2953c4;font-weight:bold;letter-spacing:-0.37px;">Edit</div>
<div class="hl" style="top:37px;width:1044px"></div>
<div class="x" id="t122" style="top:79px;font-size:28px;line-height:33px;left:17.4px;color:#1d1e24;font-weight:bold;letter-spacing:-0.34px;">Description</div>
<div class="x" id="t123" style="top:127px;font-size:15.2px;line-height:19px;left:16.2px;color:#3e4359;letter-spacing:0.01px;">This table contains master data on sales orders. Key columns included in this dataset are:</div>
<div class="x" style="left:38.8px;top:178.1px;width:5.5px;height:5.5px;border-radius:50%;background:#3e4359"></div>
<div class="x" id="t124" style="top:171px;font-size:15.2px;line-height:19px;left:56.7px;color:#3e4359;letter-spacing:0.01px;"><b>Segment:</b> Corporate, Home Office, and Consumer sales</div>
<div class="x" style="left:38.8px;top:202px;width:5.5px;height:5.5px;border-radius:50%;background:#3e4359"></div>
<div class="x" id="t125" style="top:195px;font-size:15.2px;line-height:19px;left:56.7px;color:#3e4359;letter-spacing:-0.11px;"><b>Shipping Mode:</b> First Class, Second Class, Standard Class, Same Day shipping options</div>
<div class="x" style="left:38.8px;top:225.9px;width:5.5px;height:5.5px;border-radius:50%;background:#3e4359"></div>
<div class="x" id="t126" style="top:219px;font-size:15.2px;line-height:19px;left:56.7px;color:#3e4359;letter-spacing:-0.03px;"><b>Sales Market:</b> Key markets where sales were made including EU, APAC, LATAM, Africa, US, Canada, and EMEA</div>
<div class="x" id="t127" style="top:265px;font-size:28px;line-height:33px;left:17px;color:#1d1e24;font-weight:bold;transform:scaleX(0.9347);transform-origin:0 50%;">Use Cases</div>
</div>
<!-- TERMS -->
<div class="card" style="left:1173px;top:584px;width:332px;height:287px;border-bottom:none;border-radius:4px 4px 0 0">
<div class="x" id="t128" style="top:18px;font-size:11.3px;line-height:14px;left:15.9px;color:#3e4359;letter-spacing:0.61px;">GLOSSARY TERMS (3)</div>
<svg class="x" style="left:0;top:0" width="1" height="1"><path transform="translate(282.5 24.8)" d="M0 -3.9V3.9M-3.9 0H3.9" stroke="#595f74" stroke-width="1.1" stroke-linecap="round"/></svg>
<div class="x" id="t129" style="top:17px;font-size:11.7px;line-height:15px;left:290.3px;color:#595f74;letter-spacing:0.15px;">New</div>
<div class="chip" style="left:16px;top:46.4px;width:119px;height:26.5px"></div>
<div class="x" id="t130" style="top:51px;font-size:13.4px;line-height:17px;left:23.9px;color:#2953c4;letter-spacing:-0.41px;">Retail Sales</div>
<svg class="x" style="left:0;top:0" width="1" height="1"><path transform="translate(122.5 59)" d="M-3.700 -3.700L3.700 3.700M3.700 -3.700L-3.700 3.700" stroke="#2953c4" stroke-width="1.250" stroke-linecap="round"/></svg>
<div class="chip" style="left:143.4px;top:46.4px;width:102.6px;height:26.5px"></div>
<div class="x" id="t131" style="top:51px;font-size:13.4px;line-height:17px;left:151.3px;color:#2953c4;letter-spacing:0.23px;">Quantity</div>
<svg class="x" style="left:0;top:0" width="1" height="1"><path transform="translate(233.4 59)" d="M-3.700 -3.700L3.700 3.700M3.700 -3.700L-3.700 3.700" stroke="#2953c4" stroke-width="1.250" stroke-linecap="round"/></svg>
<div class="chip" style="left:16px;top:81.3px;width:135px;height:26.5px"></div>
<div class="x" id="t132" style="top:86px;font-size:13.4px;line-height:17px;left:24.6px;color:#2953c4;letter-spacing:-0.05px;">Customer 360</div>
<svg class="x" style="left:0;top:0" width="1" height="1"><path transform="translate(139 94)" d="M-3.700 -3.700L3.700 3.700M3.700 -3.700L-3.700 3.700" stroke="#2953c4" stroke-width="1.250" stroke-linecap="round"/></svg>
<div class="chip" style="left:159.3px;top:81.3px;width:25.7px;height:26.5px"></div>
<svg class="x" style="left:0;top:0" width="1" height="1"><path transform="translate(172.2 94.2)" d="M0 -4.6V4.6M-4.6 0H4.6" stroke="#2953c4" stroke-width="1.3" stroke-linecap="round"/></svg>
<div class="x" id="t133" style="top:134px;font-size:11.3px;line-height:14px;left:15.9px;color:#3e4359;letter-spacing:0.81px;">CLASSIFICATIONS (2)</div>
<svg class="x" style="left:0;top:0" width="1" height="1"><path transform="translate(282.5 140.8)" d="M0 -3.9V3.9M-3.9 0H3.9" stroke="#595f74" stroke-width="1.1" stroke-linecap="round"/></svg>
<div class="x" id="t134" style="top:133px;font-size:11.7px;line-height:15px;left:290.3px;color:#595f74;letter-spacing:0.15px;">New</div>
<div class="chip" style="left:16px;top:162.4px;width:124px;height:26.5px"></div>
<div class="x" id="t135" style="top:167px;font-size:13.4px;line-height:17px;left:23.9px;color:#2953c4;letter-spacing:-0.02px;">Master Data</div>
<svg class="x" style="left:0;top:0" width="1" height="1"><path transform="translate(128.2 175)" d="M-3.700 -3.700L3.700 3.700M3.700 -3.700L-3.700 3.700" stroke="#2953c4" stroke-width="1.250" stroke-linecap="round"/></svg>
<div class="chip" style="left:148.1px;top:162.4px;width:90.9px;height:26.5px"></div>
<svg class="x" style="left:155.6px;top:169.2px" width="12.8" height="12.8" viewBox="0 0 15 15" ><g fill="none" stroke="#2953c4" stroke-width="1.8" stroke-linecap="round"><path d="M6.4 8.6a3 3 0 0 0 4.2 0l2.3-2.300a3 3 0 0 0-4.200-4.200l-1.200 1.200"/><path d="M8.600 6.400a3 3 0 0 0-4.200 0l-2.300 2.300a3 3 0 0 0 4.200 4.200l1.200-1.200"/></g></svg>
<div class="x" id="t136" style="top:167px;font-size:13.4px;line-height:17px;left:176.6px;color:#2953c4;font-weight:bold;letter-spacing:-0.43px;">Private</div>
<div class="chip" style="left:246.8px;top:162.4px;width:26.2px;height:26.5px"></div>
<svg class="x" style="left:0;top:0" width="1" height="1"><path transform="translate(259.9 175.3)" d="M0 -4.6V4.6M-4.6 0H4.6" stroke="#2953c4" stroke-width="1.3" stroke-linecap="round"/></svg>
<div class="x" id="t137" style="top:215px;font-size:11.3px;line-height:14px;left:15.9px;color:#6b7189;letter-spacing:0.86px;">BUSINESS METADATA</div>
<div class="x" id="t138" style="top:214px;font-size:11.7px;line-height:15px;left:292px;color:#b9bdca;letter-spacing:0.6px;">Add</div>
<div class="x" id="t139" style="top:237px;font-size:13.3px;line-height:17px;left:15.9px;color:#6b7189;letter-spacing:0.26px;">No attributes added</div>
</div>
<svg class="x" style="left:1485px;top:827px;filter:drop-shadow(0 0 7px rgba(40,50,90,0.160))" width="50" height="50" viewBox="1485 827 50 50"><path d="M1497.900 877L1535 839.900V877Z" fill="#2953c4"/><circle cx="1524.600" cy="864.200" r="20.500" fill="#2953c4"/><circle cx="1524.700" cy="864" r="9.800" fill="#7fdcf7"/></svg>
</body>
</html>
